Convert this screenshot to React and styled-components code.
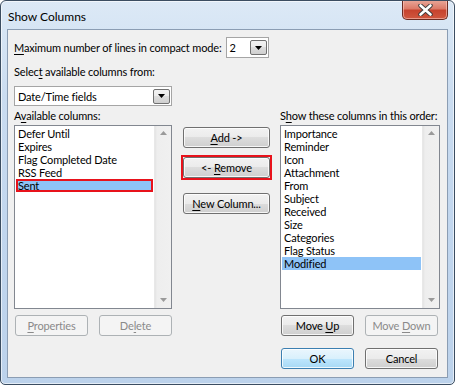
import styled, { createGlobalStyle } from "styled-components";

const GlobalStyle = createGlobalStyle`
  html, body { margin: 0; padding: 0; background: #ffffff; }
  body {
    font-family: Lato, "Liberation Sans", Arial, sans-serif;
    font-size: 11px;
    letter-spacing: -0.15px;
    color: #000;
  }
  * { box-sizing: border-box; }
`;

const Window = styled.div`
  width: 455px;
  height: 385px;
  display: flex;
  flex-direction: column;
  border: 1px solid #3b4d61;
  border-radius: 6px 6px 5px 5px;
  background: linear-gradient(180deg, #dce9f6 0%, #cadcf0 25%, #c1d6ee 60%, #bcd2eb 100%);
  box-shadow: inset 0 0 0 1px rgba(255, 255, 255, 0.6);
  overflow: hidden;
`;

const TitleBar = styled.div`
  height: 28px;
  display: flex;
  align-items: flex-start;
  justify-content: space-between;
  padding: 0 6px 0 7px;
`;

const Title = styled.div`
  padding-top: 8px;
  font-size: 12px;
  letter-spacing: 0;
  color: #000;
`;

const CloseButton = styled.div`
  width: 46px;
  height: 20px;
  margin-top: -1px;
  display: flex;
  align-items: center;
  justify-content: center;
  border: 1px solid #6b2b22;
  border-top: none;
  border-radius: 0 0 5px 5px;
  background: linear-gradient(180deg, #e9a99b 0%, #dc7b69 45%, #c7432e 55%, #d0573f 100%);
  box-shadow: inset 0 0 0 1px rgba(255, 210, 200, 0.55);
`;

const Client = styled.div`
  flex: 1;
  margin: 0 6px 6px 6px;
  border: 1px solid #8b9db3;
  background: #f0f0f0;
  padding: 7px 6px 0 6px;
  display: flex;
  flex-direction: column;
`;

const Row = styled.div`
  display: flex;
  align-items: center;
  height: 21px;
`;

const Label = styled.div`
  line-height: 15px;
  height: 15px;
  white-space: nowrap;
  margin-top: ${(p) => p.$mt || 0}px;
`;

const Combo = styled.div`
  width: ${(p) => p.$w}px;
  height: ${(p) => p.$h || 21}px;
  margin-left: ${(p) => p.$ml || 0}px;
  margin-top: ${(p) => p.$mt || 0}px;
  background: #fff;
  border: 1px solid #a5a5a5;
  display: flex;
  align-items: center;
  padding: 0 1px 0 3px;
`;

const ComboText = styled.div`
  flex: 1;
  line-height: 15px;
`;

const DropButton = styled.div`
  width: 17px;
  height: 15px;
  border: 1px solid #707070;
  border-radius: 2px;
  background: linear-gradient(180deg, #f2f2f2 0%, #ebebeb 50%, #dddddd 50%, #cfcfcf 100%);
  display: flex;
  align-items: center;
  justify-content: center;
`;

const Columns = styled.div`
  display: flex;
  margin-top: 2px;
`;

const Column = styled.div`
  width: ${(p) => p.$w}px;
  margin-left: ${(p) => p.$ml || 0}px;
  display: flex;
  flex-direction: column;
`;

const MiddleColumn = styled.div`
  width: 87px;
  margin-left: 11px;
  padding-top: 19px;
  display: flex;
  flex-direction: column;
`;

const ListBox = styled.div`
  height: 184px;
  margin-top: 2px;
  background: #fff;
  border: 1px solid #828790;
  display: flex;
`;

const Items = styled.div`
  flex: 1;
  padding: 1px 1px 0 1px;
  display: flex;
  flex-direction: column;
`;

const Item = styled.div`
  height: 13px;
  line-height: 13px;
  padding-left: ${(p) => (p.$marked ? 0 : 2)}px;
  background: ${(p) => (p.$selected ? "#8ec3f7" : "transparent")};
  border: ${(p) => (p.$marked ? "2px solid #e8121b" : "none")};
  white-space: nowrap;
  display: flex;
  align-items: center;
`;

const ScrollBar = styled.div`
  width: 17px;
  background: linear-gradient(90deg, #e3e3e3 0px, #eeeeee 2px, #f0f0f0 100%);
  border-left: 1px solid #e8e8e8;
  display: flex;
  flex-direction: column;
  justify-content: space-between;
  align-items: center;
  padding: 5px 0 6px;
`;

const ButtonRow = styled.div`
  display: flex;
  gap: 11px;
  margin-top: ${(p) => p.$mt || 6}px;
  padding-left: ${(p) => p.$pl || 0}px;
`;

const MarkBox = styled.div`
  border: 2px solid #e8121b;
  margin: ${(p) => p.$mt - 2}px -2px -2px -2px;
  display: flex;
`;

const Button = styled.div`
  width: ${(p) => p.$w || 73}px;
  height: 21px;
  margin-top: ${(p) => p.$mt || 0}px;
  display: flex;
  align-items: center;
  justify-content: center;
  border-radius: 3px;
  white-space: pre;
  border: 1px solid ${(p) => (p.$disabled ? "#adb2b5" : p.$default ? "#3c7fb1" : "#707070")};
  color: ${(p) => (p.$disabled ? "#8a8a8a" : "#000")};
  background: ${(p) =>
    p.$disabled
      ? "#f4f4f4"
      : p.$default
      ? "linear-gradient(180deg, #eaf6fd 0%, #d9f0fc 50%, #bee6fd 50%, #a7d9f5 100%)"
      : "linear-gradient(180deg, #f2f2f2 0%, #ebebeb 50%, #dddddd 50%, #cfcfcf 100%)"};
  box-shadow: inset 0 0 0 1px ${(p) => (p.$disabled ? "#f4f4f4" : "rgba(255,255,255,0.8)")};
`;

const Key = styled.span`
  text-decoration: underline;
  text-underline-offset: 2px;
`;

function Arrow({ down, color = "#000" }) {
  return (
    <svg width="7" height="4" viewBox="0 0 7 4">
      <polygon points={down ? "0,0 7,0 3.5,4" : "0,4 7,4 3.5,0"} fill={color} />
    </svg>
  );
}

function ScrollArrows() {
  return (
    <ScrollBar>
      <Arrow color="#9a9a9a" />
      <Arrow down color="#9a9a9a" />
    </ScrollBar>
  );
}

function CloseGlyph() {
  return (
    <svg width="15" height="12" viewBox="0 0 15 12">
      <path d="M2.5 1.5 L12.5 10.5 M12.5 1.5 L2.5 10.5" stroke="#3a3a3a" strokeWidth="4.4" strokeLinecap="round" />
      <path d="M2.5 1.5 L12.5 10.5 M12.5 1.5 L2.5 10.5" stroke="#ffffff" strokeWidth="2.6" strokeLinecap="round" />
    </svg>
  );
}

const available = ["Defer Until", "Expires", "Flag Completed Date", "RSS Feed", "Sent"];
const shown = [
  "Importance",
  "Reminder",
  "Icon",
  "Attachment",
  "From",
  "Subject",
  "Received",
  "Size",
  "Categories",
  "Flag Status",
  "Modified",
];

export default function App() {
  return (
    <>
      <GlobalStyle />
      <Window>
        <TitleBar>
          <Title>Show Columns</Title>
          <CloseButton>
            <CloseGlyph />
          </CloseButton>
        </TitleBar>
        <Client>
          <Row>
            <Label>
              <Key>M</Key>aximum number of lines in compact mode:
            </Label>
            <Combo $w={43} $ml={4}>
              <ComboText>2</ComboText>
              <DropButton>
                <Arrow down />
              </DropButton>
            </Combo>
          </Row>
          <Label $mt={6}>
            Selec<Key>t</Key> available columns from:
          </Label>
          <Combo $w={158} $h={20} $mt={7}>
            <ComboText>Date/Time fields</ComboText>
            <DropButton>
              <Arrow down />
            </DropButton>
          </Combo>
          <Columns>
            <Column $w={158}>
              <Label>
                A<Key>v</Key>ailable columns:
              </Label>
              <ListBox>
                <Items>
                  {available.map((name) => (
                    <Item key={name} $selected={name === "Sent"} $marked={name === "Sent"}>
                      {name}
                    </Item>
                  ))}
                </Items>
                <ScrollArrows />
              </ListBox>
              <ButtonRow $pl={1}>
                <Button $disabled>
                  <span><Key>P</Key>roperties</span>
                </Button>
                <Button $disabled>
                  <span>De<Key>l</Key>ete</span>
                </Button>
              </ButtonRow>
            </Column>
            <MiddleColumn>
              <Button $w={87}>
                <span><Key>A</Key>dd -&gt;</span>
              </Button>
              <MarkBox $mt={9}>
                <Button $w={87}>
                  <span>&lt;- <Key>R</Key>emove</span>
                </Button>
              </MarkBox>
              <Button $w={87} $mt={15}>
                <span><Key>N</Key>ew Column...</span>
              </Button>
            </MiddleColumn>
            <Column $w={160} $ml={10}>
              <Label>
                S<Key>h</Key>ow these columns in this order:
              </Label>
              <ListBox>
                <Items>
                  {shown.map((name) => (
                    <Item key={name} $selected={name === "Modified"}>
                      {name}
                    </Item>
                  ))}
                </Items>
                <ScrollArrows />
              </ListBox>
              <ButtonRow $pl={1}>
                <Button>
                  <span>Move <Key>U</Key>p</span>
                </Button>
                <Button $disabled>
                  <span>Move <Key>D</Key>own</span>
                </Button>
              </ButtonRow>
              <ButtonRow $mt={12} $pl={1}>
                <Button $default>OK</Button>
                <Button>Cancel</Button>
              </ButtonRow>
            </Column>
          </Columns>
        </Client>
      </Window>
    </>
  );
}
